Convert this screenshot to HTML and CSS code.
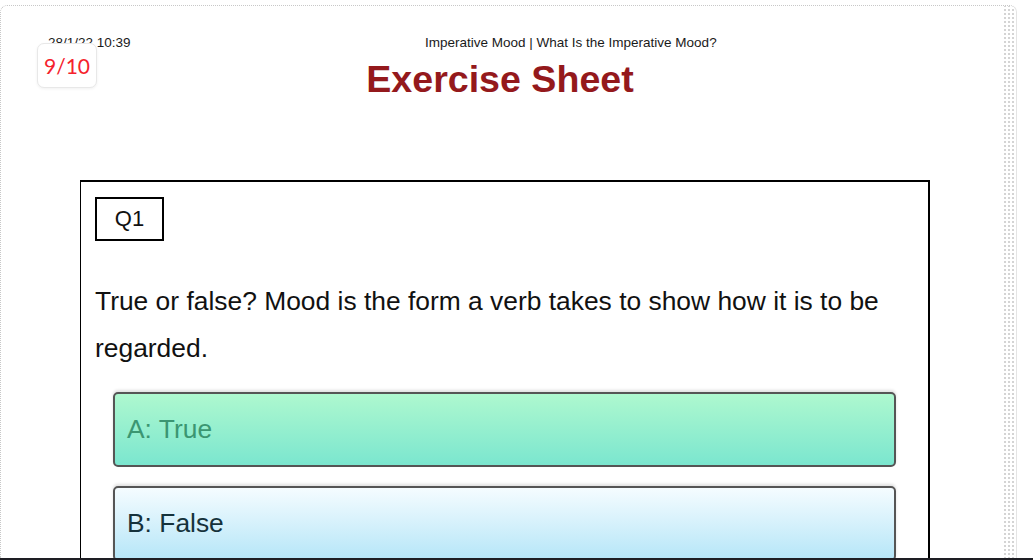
FILE: index.html
```html
<!DOCTYPE html>
<html lang="en">
<head>
<meta charset="utf-8">
<title>Exercise Sheet</title>
<link rel="stylesheet" href="styles.css">
</head>
<body>
<div class="frame">
  <div class="card">
    <div class="page">
      <div class="print-head">
        <span class="print-date">28/1/22 10:39</span>
        <span class="print-title">Imperative Mood | What Is the Imperative Mood?</span>
      </div>
      <h1 class="sheet-title">Exercise Sheet</h1>
      <div class="sheet">
        <div class="qnum">Q1</div>
        <p class="question">True or false? Mood is the form a verb takes to show how it is to be regarded.</p>
        <div class="options">
          <div class="option option-correct">A: True</div>
          <div class="option option-plain">B: False</div>
        </div>
      </div>
    </div>
    <div class="dots"></div>
    <div class="score">9/10</div>
  </div>
  <div class="bottom-bar"></div>
</div>
</body>
</html>
```
FILE: styles.css
```css
* { box-sizing: border-box; }
html, body { margin: 0; padding: 0; background: #fff; }
body { font-family: "Liberation Sans", Arial, sans-serif; overflow: hidden; }

.frame {
  width: 1033px;
  height: 560px;
  display: flex;
  flex-direction: column;
  padding-top: 5px;
}

.card {
  position: relative;
  flex: 1;
  width: 1017px;
  display: flex;
  overflow: hidden;
  border-top: 1px dotted #c8c8c8;
  border-left: 1px dotted #c8c8c8;
  border-right: 1px solid #e4e4e4;
  border-top-right-radius: 7px;
  border-top-left-radius: 7px;
}

.page {
  flex: 1;
  padding-top: 29px;
}

.print-head {
  display: flex;
  padding-left: 47px;
  font-size: 13.5px;
  line-height: 16px;
  color: #1a1a1a;
}
.print-date { width: 377px; }

.sheet-title {
  margin: 6px 0 0 0;
  text-align: center;
  width: 998px;
  font-size: 37.6px;
  line-height: 44px;
  font-weight: bold;
  color: #94191c;
}

.sheet {
  margin: 79px 0 0 79px;
  width: 850px;
  border: 1px solid #000;
  border-top-width: 2px;
  border-right-width: 2px;
  border-bottom: none;
  padding: 15px 0 0 14px;
}

.qnum {
  width: 69px;
  height: 44px;
  border: 2px solid #000;
  display: flex;
  align-items: center;
  justify-content: center;
  font-size: 22px;
  color: #111;
}

.question {
  margin: 37px 0 0 0;
  width: 810px;
  font-size: 26.4px;
  line-height: 47px;
  color: #111;
}

.options {
  display: flex;
  flex-direction: column;
  gap: 19px;
  margin: 20px 0 0 18px;
}

.option {
  width: 783px;
  height: 75px;
  border: 2px solid #555;
  border-radius: 5px;
  display: flex;
  align-items: center;
  padding-left: 12px;
  font-size: 26.4px;
  box-shadow: 0 -2px 3px rgba(0, 0, 0, 0.12);
}
.option-correct {
  background: linear-gradient(#aef8cf, #7be6cf);
  color: #3b9672;
}
.option-plain {
  background: linear-gradient(#f5fcff, #b6e6f8);
  color: #15323b;
}

.dots {
  width: 11px;
  margin-right: 2px;
  background-image: radial-gradient(circle, #d4d4d4 0.8px, transparent 1.1px);
  background-size: 4px 4px;
  background-position: 0 2px;
}

.score {
  position: absolute;
  left: 36px;
  top: 37px;
  width: 60px;
  height: 45px;
  background: #fff;
  border: 1px solid #e8e8e8;
  border-radius: 7px;
  box-shadow: 0 1px 3px rgba(0, 0, 0, 0.06);
  display: flex;
  align-items: center;
  justify-content: center;
  font-family: Lato, "Noto Sans", sans-serif;
  font-size: 21px;
  color: #f5222d;
}

.bottom-bar {
  height: 2px;
  background: #1e1e24;
}
```
